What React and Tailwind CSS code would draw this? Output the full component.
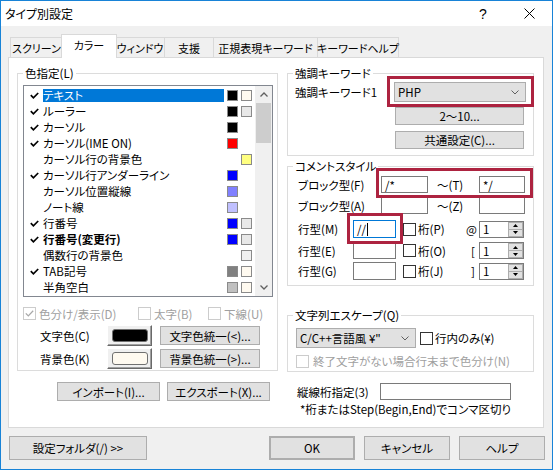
import React from "react";

const items = [
  { t: "テキスト", c: true, fg: "#000000", bg: "#fffaf0", sel: true },
  { t: "ルーラー", c: true, fg: "#000000", bg: "#e8e8e8" },
  { t: "カーソル", c: true, fg: "#000000" },
  { t: "カーソル(IME ON)", c: true, fg: "#ff0000" },
  { t: "カーソル行の背景色", bg: "#ffff80" },
  { t: "カーソル行アンダーライン", c: true, fg: "#0000ff" },
  { t: "カーソル位置縦線", fg: "#8080ff" },
  { t: "ノート線", fg: "#c0c0ff" },
  { t: "行番号", c: true, fg: "#0000ff", bg: "#e8e8e8" },
  { t: "行番号(変更行)", c: true, bold: true, fg: "#0000ff", bg: "#e8e8e8" },
  { t: "偶数行の背景色", bg: "#f0f0f0" },
  { t: "TAB記号", c: true, fg: "#808080", bg: "#fffaf0" },
  { t: "半角空白", fg: "#c0c0c0", bg: "#fffaf0" },
];

function Btn({ className = "", children }) {
  return (
    <div className={`flex items-center justify-center bg-[#e1e1e1] border border-[#adadad] whitespace-nowrap ${className}`}>
      {children}
    </div>
  );
}

function Check({ checked, disabled }) {
  return (
    <span
      className={`w-[13px] h-[13px] shrink-0 border bg-white flex items-center justify-center ${
        disabled ? "border-[#cccccc]" : "border-[#333333]"
      }`}
    >
      {checked && (
        <svg width="9" height="7" viewBox="0 0 9 7">
          <path d="M0.8 3.4 L3.3 5.9 L8.2 0.8" fill="none" stroke={disabled ? "#a8a8a8" : "#000"} strokeWidth="1.3" />
        </svg>
      )}
    </span>
  );
}

function Group({ label, className = "", children }) {
  return (
    <fieldset className={`border border-[#dcdcdc] ${className}`}>
      <legend className="ml-[5px] px-[2px] leading-[16px]">{label}</legend>
      {children}
    </fieldset>
  );
}

function Select({ className = "", children }) {
  return (
    <div className={`flex items-center bg-[#e1e1e1] border border-[#adadad] ${className}`}>
      <span className="flex-1 pl-[3px] whitespace-nowrap">{children}</span>
      <svg className="mr-[6px]" width="8" height="5" viewBox="0 0 8 5">
        <path d="M0.5 0.5 L4 4 L7.5 0.5" fill="none" stroke="#606060" />
      </svg>
    </div>
  );
}

function Input({ className = "", children }) {
  return (
    <div className={`bg-white border border-[#7a7a7a] flex items-center pl-[3px] ${className}`}>{children}</div>
  );
}

function Spin({ v }) {
  return (
    <div className="w-[45px] h-[17px] bg-white border border-[#7a7a7a] flex">
      <span className="flex-1 pl-[3px] flex items-center">{v}</span>
      <div className="w-[15px] flex flex-col">
        <div className="flex-1 bg-[#e1e1e1] border border-[#adadad] flex items-center justify-center">
          <svg width="5" height="3" viewBox="0 0 5 3">
            <path d="M0 3 L2.5 0 L5 3Z" fill="#000" />
          </svg>
        </div>
        <div className="flex-1 bg-[#e1e1e1] border border-t-0 border-[#adadad] flex items-center justify-center">
          <svg width="5" height="3" viewBox="0 0 5 3">
            <path d="M0 0 L2.5 3 L5 0Z" fill="#000" />
          </svg>
        </div>
      </div>
    </div>
  );
}

function ColorBtn({ swatch }) {
  return (
    <div className="w-[45px] h-[21px] flex items-center justify-center bg-[#f0f0f0] border border-t-white border-l-white border-r-[#696969] border-b-[#696969] shadow-[inset_-1px_-1px_0_#a0a0a0]">
      <span className={`w-[36px] h-[13px] rounded-[3px] border border-[#707070] ${swatch}`} />
    </div>
  );
}

function Swatch({ c }) {
  if (!c) return <span className="w-[11px] h-[11px] ml-[3px] shrink-0" />;
  return <span className="w-[11px] h-[11px] ml-[3px] shrink-0 border border-[#8a8a8a]" style={{ background: c }} />;
}

function CheckMark() {
  return (
    <svg width="9" height="7" viewBox="0 0 9 7">
      <path d="M0.8 3.2 L3.4 5.8 L8.2 1" fill="none" stroke="#000" strokeWidth="1.7" />
    </svg>
  );
}

export default function App() {
  return (
    <div className="w-[553px] h-[470px] border border-[#1883d7] flex flex-col bg-[#f0f0f0] text-[11.5px] leading-[16px] text-black font-['Noto_Sans_CJK_JP',sans-serif] [font-feature-settings:'palt'] overflow-hidden">
      {/* Title bar */}
      <div className="h-[25px] shrink-0 bg-white flex items-center">
        <span className="pl-[4px] flex-1 text-[12px]">タイプ別設定</span>
        <span className="w-[46px] h-full flex items-center justify-center text-[14px] font-['Liberation_Sans',sans-serif]">?</span>
        <span className="w-[46px] h-full flex items-center justify-center">
          <svg width="11" height="11" viewBox="0 0 11 11">
            <path d="M0.5 0.5 L10.5 10.5 M10.5 0.5 L0.5 10.5" stroke="#000" strokeWidth="1" />
          </svg>
        </span>
      </div>

      {/* Tabs */}
      <div className="h-[31px] shrink-0 flex items-end pl-[9px] whitespace-nowrap text-[11px]">
        <div className="w-[53px] h-[20px] border border-b-0 border-[#d9d9d9] flex items-center justify-center">スクリーン</div>
        <div className="relative z-10 w-[56px] h-[24px] ml-[-2px] mr-[-2px] mb-[-1px] bg-white border border-b-0 border-[#d9d9d9] flex justify-center pt-[2px]">カラー</div>
        <div className="w-[50px] h-[20px] border border-b-0 border-[#d9d9d9] flex items-center justify-center">ウィンドウ</div>
        <div className="w-[50px] h-[20px] -ml-px border border-b-0 border-[#d9d9d9] flex items-center justify-center">支援</div>
        <div className="w-[105px] h-[20px] -ml-px border border-b-0 border-[#d9d9d9] flex items-center justify-center">正規表現キーワード</div>
        <div className="w-[82px] h-[20px] -ml-px border border-b-0 border-[#d9d9d9] flex items-center justify-center">キーワードヘルプ</div>
      </div>

      {/* Tab panel */}
      <div className="ml-[7px] w-[536px] h-[371px] shrink-0 bg-white border border-[#d9d9d9] flex items-start pl-[8px] pt-[7px]">
        {/* Left column */}
        <div className="w-[261px] flex flex-col">
          <Group label="色指定(L)" className="h-[306px]">
            <div className="mt-[4px] ml-[5px] w-[250px] h-[212px] border border-[#828790] bg-white flex">
              <div className="w-[231px] pt-[1px] flex flex-col">
                {items.map((it, i) => (
                  <div key={i} className="h-[16px] flex items-center">
                    <span className="w-[19px] h-full flex items-center justify-end pr-[4px]">{it.c && <CheckMark />}</span>
                    <span
                      className={`w-[181px] h-[13px] flex items-center whitespace-nowrap ${
                        it.sel ? "bg-[#0078d7] text-white" : ""
                      } ${it.bold ? "font-bold" : ""}`}
                    >
                      {it.t}
                    </span>
                    <Swatch c={it.fg} />
                    <Swatch c={it.bg} />
                  </div>
                ))}
              </div>
              <div className="w-[17px] bg-[#f0f0f0] flex flex-col">
                <div className="h-[17px] flex items-center justify-center">
                  <svg width="8" height="5" viewBox="0 0 8 5">
                    <path d="M0.5 4.5 L4 1 L7.5 4.5" fill="none" stroke="#606060" strokeWidth="1.3" />
                  </svg>
                </div>
                <div className="h-[40px] mx-[1px] bg-[#cdcdcd]" />
                <div className="flex-1" />
                <div className="h-[17px] flex items-center justify-center">
                  <svg width="8" height="5" viewBox="0 0 8 5">
                    <path d="M0.5 0.5 L4 4 L7.5 0.5" fill="none" stroke="#606060" strokeWidth="1.3" />
                  </svg>
                </div>
              </div>
            </div>

            <div className="mt-[10px] ml-[5px] flex items-center h-[13px] text-[#a0a0a0]">
              <div className="w-[115px] flex items-center">
                <Check checked disabled />
                <span className="ml-[3px]">色分け/表示(D)</span>
              </div>
              <div className="w-[70px] flex items-center">
                <Check disabled />
                <span className="ml-[3px]">太字(B)</span>
              </div>
              <div className="flex items-center">
                <Check disabled />
                <span className="ml-[3px]">下線(U)</span>
              </div>
            </div>

            <div className="mt-[5px] flex items-center h-[21px]">
              <span className="pl-[22px] w-[89px]">文字色(C)</span>
              <ColorBtn swatch="bg-black" />
              <Btn className="ml-[8px] w-[100px] h-[19px]">{"文字色統一(<)..."}</Btn>
            </div>
            <div className="mt-[2px] flex items-center h-[21px]">
              <span className="pl-[22px] w-[89px]">背景色(K)</span>
              <ColorBtn swatch="bg-[#fffaf0]" />
              <Btn className="ml-[8px] w-[100px] h-[19px]">{"背景色統一(>)..."}</Btn>
            </div>
          </Group>

          <div className="mt-[11px] flex">
            <Btn className="ml-[40px] w-[103px] h-[19px]">インポート(I)...</Btn>
            <Btn className="ml-[7px] w-[103px] h-[19px]">エクスポート(X)...</Btn>
          </div>
        </div>

        {/* Right column */}
        <div className="relative ml-[9px] w-[247px] flex flex-col">
          <Group label="強調キーワード" className="h-[91px]">
            <div className="mt-[1px] flex items-center h-[20px]">
              <span className="pl-[7px] w-[106px] whitespace-nowrap">強調キーワード1</span>
              <Select className="w-[132px] h-[20px]">PHP</Select>
            </div>
            <Btn className="ml-[107px] mt-[5px] w-[129px] h-[18px]">2〜10...</Btn>
            <Btn className="ml-[107px] mt-[6px] w-[129px] h-[18px]">共通設定(C)...</Btn>
          </Group>

          <Group label="コメントスタイル" className="mt-[2px] h-[128px]">
            <div className="mt-[2px] flex items-center h-[17px]">
              <span className="pl-[10px] w-[93px]">ブロック型(F)</span>
              <Input className="w-[47px] h-[17px]">/*</Input>
              <span className="pl-[9px] w-[51px]">〜(T)</span>
              <Input className="w-[46px] h-[17px]">*/</Input>
            </div>
            <div className="mt-[4px] flex items-center h-[17px]">
              <span className="pl-[10px] w-[93px]">ブロック型(A)</span>
              <Input className="w-[47px] h-[17px]" />
              <span className="pl-[9px] w-[51px]">〜(Z)</span>
              <Input className="w-[46px] h-[17px]" />
            </div>
            <div className="mt-[6px] flex items-center h-[18px]">
              <span className="pl-[10px] w-[65px]">行型(M)</span>
              <Input className="w-[43px] h-[18px] border-[#0078d7]">
                //
                <span className="w-px h-[13px] bg-black ml-[1px]" />
              </Input>
              <div className="ml-[7px] w-[63px] flex items-center">
                <Check />
                <span className="ml-[2px]">桁(P)</span>
              </div>
              <span className="w-[13px]">@</span>
              <Spin v="1" />
            </div>
            <div className="mt-[4px] flex items-center h-[17px]">
              <span className="pl-[10px] w-[65px]">行型(E)</span>
              <Input className="w-[43px] h-[17px]" />
              <div className="ml-[7px] w-[63px] flex items-center">
                <Check />
                <span className="ml-[2px]">桁(O)</span>
              </div>
              <span className="w-[13px] pl-[5px]">[</span>
              <Spin v="1" />
            </div>
            <div className="mt-[3px] flex items-center h-[18px]">
              <span className="pl-[10px] w-[65px]">行型(G)</span>
              <Input className="w-[43px] h-[18px]" />
              <div className="ml-[7px] w-[63px] flex items-center">
                <Check />
                <span className="ml-[2px]">桁(J)</span>
              </div>
              <span className="w-[13px] pl-[5px]">]</span>
              <Spin v="1" />
            </div>
          </Group>

          <Group label="文字列エスケープ(Q)" className="mt-[21px] h-[65px]">
            <div className="mt-[5px] flex items-center">
              <Select className="ml-[8px] w-[120px] h-[20px]">C/C++言語風 ¥"</Select>
              <span className="ml-[4px]">
                <Check />
              </span>
              <span className="ml-[2px]">行内のみ(¥)</span>
            </div>
            <div className="mt-[5px] ml-[8px] flex items-center text-[#a0a0a0]">
              <Check disabled />
              <span className="ml-[4px] whitespace-nowrap">終了文字がない場合行末まで色分け(N)</span>
            </div>
          </Group>

          <div className="mt-[11px] flex items-center h-[17px]">
            <span className="pl-[10px] w-[93px]">縦線桁指定(3)</span>
            <Input className="w-[131px] h-[17px]" />
          </div>
          <div className="mt-[1px] pl-[13px] whitespace-nowrap">*桁またはStep(Begin,End)でコンマ区切り</div>

          {/* annotation boxes */}
          <div className="absolute left-[100px] top-[11px] w-[147px] h-[31px] border-[3px] border-[#ad2340]" />
          <div className="absolute left-[89px] top-[103px] w-[157px] h-[30px] border-[3px] border-[#ad2340]" />
          <div className="absolute left-[60px] top-[148px] w-[56px] h-[31px] border-[3px] border-[#ad2340]" />
        </div>
      </div>

      {/* Bottom buttons */}
      <div className="mt-[8px] flex pl-[8px]">
        <Btn className="w-[138px] h-[24px]">設定フォルダ(/) &gt;&gt;</Btn>
        <Btn className="ml-[122px] w-[86px] h-[24px] border-2 border-[#0078d7]">OK</Btn>
        <Btn className="ml-[9px] w-[86px] h-[24px]">キャンセル</Btn>
        <Btn className="ml-[9px] w-[86px] h-[24px]">ヘルプ</Btn>
      </div>
    </div>
  );
}
